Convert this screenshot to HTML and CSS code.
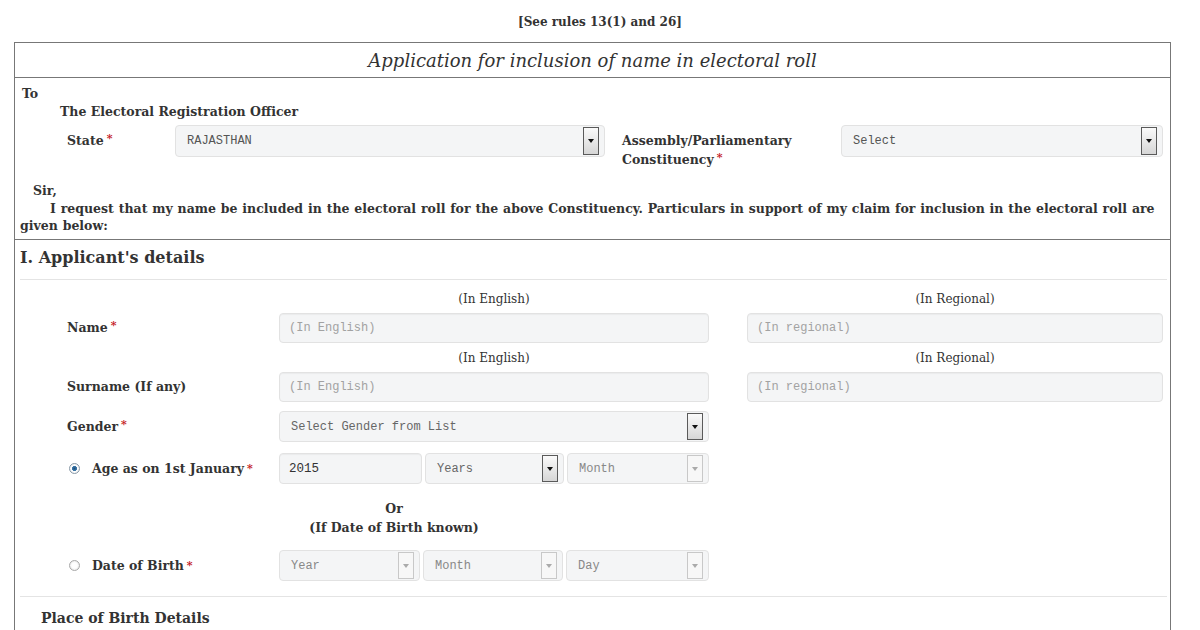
FILE: index.html
```html
<!DOCTYPE html>
<html lang="en">
<head>
  <meta charset="UTF-8">
  <title>Form 6 - Application for inclusion of name in electoral roll</title>
  <link rel="stylesheet" href="styles.css">
</head>
<body>
<div class="page">

  <p class="rules">[See rules 13(1) and 26]</p>

  <div class="form-box">
    <div class="form-title">Application for inclusion of name in electoral roll</div>

    <!-- addressee block -->
    <div class="addressee">
      <div class="to">To</div>
      <div class="ero">The Electoral Registration Officer</div>

      <div class="state-row">
        <label class="lbl">State<span class="req">*</span></label>
        <div class="select select-state">
          <span class="select-text dark">RAJASTHAN</span>
          <span class="arrow"></span>
        </div>
        <label class="lbl lbl-ac">Assembly/Parliamentary Constituency<span class="req">*</span></label>
        <div class="select select-ac">
          <span class="select-text dark">Select</span>
          <span class="arrow"></span>
        </div>
      </div>

      <div class="sir">Sir,</div>
      <p class="request">I request that my name be included in the electoral roll for the above Constituency. Particulars in support of my claim for inclusion in the electoral roll are given below:</p>
    </div>

    <!-- I. Applicant's details -->
    <div class="section">
      <h2 class="section-title">I. Applicant's details</h2>
      <hr class="rule">

      <div class="fields">
        <div class="row caption-row">
          <span></span>
          <span class="caption">(In English)</span>
          <span class="caption">(In Regional)</span>
        </div>
        <div class="row">
          <label class="lbl">Name<span class="req">*</span></label>
          <input class="input" type="text" placeholder="(In English)">
          <input class="input" type="text" placeholder="(In regional)">
        </div>

        <div class="row caption-row">
          <span></span>
          <span class="caption">(In English)</span>
          <span class="caption">(In Regional)</span>
        </div>
        <div class="row">
          <label class="lbl">Surname (If any)</label>
          <input class="input" type="text" placeholder="(In English)">
          <input class="input" type="text" placeholder="(In regional)">
        </div>

        <div class="row row-gender">
          <label class="lbl">Gender<span class="req">*</span></label>
          <div class="select">
            <span class="select-text">Select Gender from List</span>
            <span class="arrow"></span>
          </div>
        </div>

        <div class="row row-age">
          <label class="lbl radio-lbl"><span class="radio checked"></span>Age as on 1st January<span class="req">*</span></label>
          <div class="triple">
            <input class="input" type="text" value="2015">
            <div class="select">
              <span class="select-text">Years</span>
              <span class="arrow"></span>
            </div>
            <div class="select disabled">
              <span class="select-text">Month</span>
              <span class="arrow"></span>
            </div>
          </div>
        </div>

        <div class="row or-row">
          <span></span>
          <div class="or">Or<br>(If Date of Birth known)</div>
        </div>

        <div class="row">
          <label class="lbl radio-lbl"><span class="radio"></span>Date of Birth<span class="req">*</span></label>
          <div class="triple triple-dob">
            <div class="select disabled">
              <span class="select-text">Year</span>
              <span class="arrow"></span>
            </div>
            <div class="select disabled">
              <span class="select-text">Month</span>
              <span class="arrow"></span>
            </div>
            <div class="select disabled">
              <span class="select-text">Day</span>
              <span class="arrow"></span>
            </div>
          </div>
        </div>
      </div>

      <hr class="rule">
      <h3 class="sub-title">Place of Birth Details</h3>
    </div>
  </div>

</div>
</body>
</html>
```

FILE: styles.css
```css
body {
  margin: 0;
  background: #fff;
  font-family: "DejaVu Serif", Georgia, serif;
  font-size: 12.5px;
  color: #333;
}

.page {
  padding: 0 29px 0 14px;
}

.rules {
  margin: 0 -29px 0 -14px;
  padding-top: 15px;
  height: 27px;
  text-align: center;
  font-weight: bold;
  font-size: 12px;
}

.form-box {
  border: 1px solid #777;
  border-bottom: none;
  height: 600px;
}

.form-title {
  height: 34px;
  line-height: 35px;
  text-align: center;
  font-style: italic;
  font-size: 18px;
  border-bottom: 1px solid #777;
}

/* addressee */
.addressee {
  padding: 8px 7px 5px 7px;
  border-bottom: 1px solid #777;
  font-weight: bold;
}

.to {
  line-height: 16px;
}

.ero {
  margin-left: 38px;
  line-height: 18px;
  margin-top: 1px;
}

.state-row {
  display: flex;
  align-items: flex-start;
  margin-top: 4px;
  margin-left: 45px;
}

.state-row .lbl {
  width: 108px;
  line-height: 32px;
}

.state-row .lbl-ac {
  width: 170px;
  margin-left: 17px;
  line-height: 19px;
  padding-top: 6px;
  white-space: normal;
}

.select-state {
  width: 430px;
}

.select-ac {
  width: 322px;
  margin-left: 49px;
}

.sir {
  margin-top: 13px;
  margin-left: 11px;
  line-height: 17px;
}

.request {
  margin: 1px -6px 0 -2px;
  text-indent: 30px;
  line-height: 17px;
  word-spacing: 0.5px;
}

/* inputs */
.lbl {
  font-weight: bold;
  white-space: nowrap;
}

.req {
  color: #c4161c;
  font-size: 11px;
  line-height: 0;
  vertical-align: 3px;
  margin-left: 3px;
}

.input {
  box-sizing: border-box;
  height: 30px;
  width: 100%;
  border: 1px solid #e2e2e2;
  border-radius: 4px;
  background: #f4f5f6;
  box-shadow: inset 0 1px 1px rgba(0, 0, 0, 0.04);
  padding: 0 9px;
  font-family: "Liberation Mono", "Courier New", monospace;
  font-size: 12px;
  color: #333;
  outline: none;
}

.input::placeholder {
  color: #a2a2a2;
}

.select {
  box-sizing: border-box;
  display: flex;
  align-items: center;
  height: 32px;
  border: 1px solid #e2e2e2;
  border-radius: 4px;
  background: #f4f5f6;
  padding: 1px 1px 1px 11px;
  font-family: "Liberation Mono", "Courier New", monospace;
  font-size: 12px;
  font-weight: normal;
  color: #666;
}

.select-text {
  flex: 1;
}

.select-text.dark {
  color: #555;
}

.arrow {
  box-sizing: border-box;
  width: 16px;
  align-self: stretch;
  margin-right: 4px;
  border: 1px solid #5a5a5a;
  background: linear-gradient(#fafafa, #d6d6d6);
  display: flex;
  align-items: center;
  justify-content: center;
}

.arrow::after {
  content: "";
  border-left: 3px solid transparent;
  border-right: 3px solid transparent;
  border-top: 4px solid #111;
}

.select.disabled {
  color: #888;
}

.select.disabled .arrow {
  border-color: #c8c8c8;
  background: #f7f7f7;
}

.select.disabled .arrow::after {
  border-top-color: #aaa;
}

/* applicant section */
.section {
  padding: 0 3px 0 5px;
}

.section-title {
  margin: 0;
  padding-top: 8px;
  height: 31px;
  line-height: 20px;
  font-size: 16px;
}

.rule {
  margin: 0;
  border: none;
  border-top: 1px solid #e4e4e4;
}

.fields {
  padding: 4px 0 15px 47px;
}

.row {
  display: grid;
  grid-template-columns: 174px 430px 416px;
  column-gap: 38px;
  align-items: center;
}

.row .lbl {
  line-height: 30px;
}

.caption-row {
  height: 29px;
  align-items: end;
  font-size: 12px;
}

.caption {
  text-align: center;
  line-height: 14px;
  padding-bottom: 7px;
}

.row-gender {
  margin-top: 9px;
}

.row-gender .select {
  height: 31px;
}

.row-age {
  margin-top: 11px;
}

.radio-lbl {
  display: flex;
  align-items: center;
}

.radio {
  flex-shrink: 0;
  box-sizing: border-box;
  width: 11px;
  height: 11px;
  margin: 0 12px 0 2px;
  border-radius: 50%;
  border: 1px solid #a9a9a9;
  background: radial-gradient(circle, #fff 40%, #dcdcdc 100%);
}

.radio.checked {
  border-color: #8a9aa8;
  background: radial-gradient(circle, #1c4f7d 0, #3a76a8 35%, #fff 45%, #e0e4e8 100%);
}

.triple {
  display: grid;
  grid-template-columns: 143px 139px 1fr;
  column-gap: 3px;
}

.triple-dob {
  grid-template-columns: 141px 140px 1fr;
}

.triple .select,
.triple .input {
  height: 31px;
}

.triple .input {
  color: #333;
  font-size: 12.5px;
}

.or-row {
  margin: 15px 0 13px 0;
}

.or {
  width: 230px;
  text-align: center;
  font-weight: bold;
  line-height: 19px;
}

.sub-title {
  margin: 0;
  padding: 13px 0 0 21px;
  line-height: 17px;
  font-size: 14px;
}
```
